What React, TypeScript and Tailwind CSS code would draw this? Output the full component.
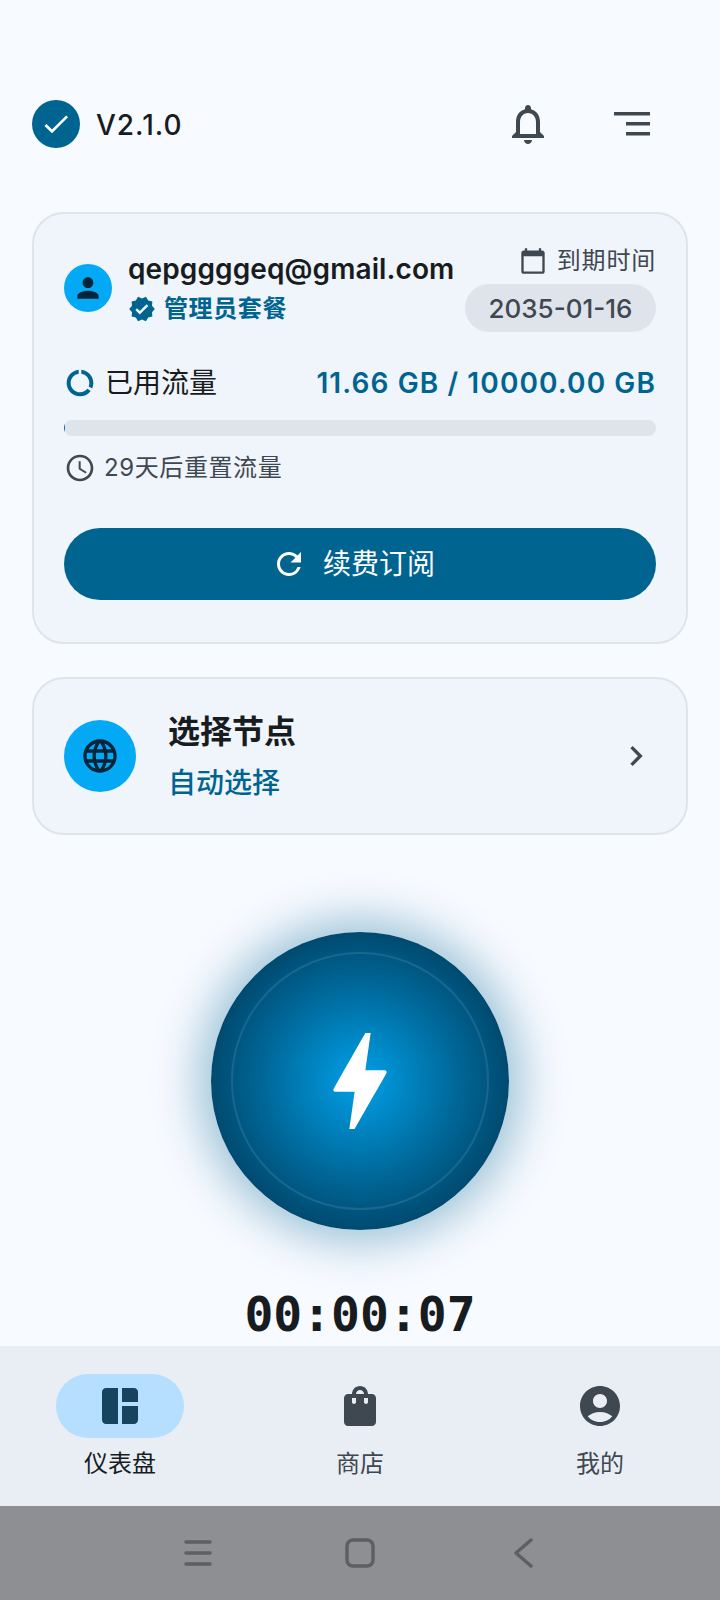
import React from "react";
import {
  MdAccessTime,
  MdAccountCircle,
  MdBolt,
  MdCalendarToday,
  MdCheck,
  MdChevronRight,
  MdDataUsage,
  MdLanguage,
  MdNotificationsNone,
  MdPerson,
  MdRefresh,
  MdShoppingBag,
  MdSpaceDashboard,
  MdVerified,
} from "react-icons/md";

const font = "font-['Inter','Noto_Sans_CJK_SC',sans-serif]";

const App: React.FC = () => {
  return (
    <div className={`${font} flex h-[1600px] w-[720px] flex-col overflow-hidden bg-[#f7faff] text-[#171c20]`}>
      <div className="flex-1 px-8 pt-[100px]">
        {/* header */}
        <div className="flex h-12 items-center">
          <div className="flex h-12 w-12 items-center justify-center rounded-full bg-[#006491]">
            <MdCheck size={32} color="#ffffff" />
          </div>
          <span className="ml-4 pt-[2px] text-[28px] leading-none font-medium tracking-[1px]">V2.1.0</span>
          <MdNotificationsNone size={48} color="#3f4850" className="ml-auto mr-[62px]" />
          <svg width="36" height="24" viewBox="0 0 36 24" className="mr-[38px]" fill="#3f4850">
            <rect x="0" y="0" width="36" height="3.5" />
            <rect x="12" y="10" width="24" height="3.5" />
            <rect x="12" y="20" width="24" height="3.5" />
          </svg>
        </div>

        {/* subscription card */}
        <div className="mt-16 h-[432px] rounded-[32px] border-2 border-[#dfe3eb] bg-[#f0f4fb] px-[30px]">
          <div className="flex items-start justify-between pt-[30px]">
            <div className="flex items-center gap-4 pt-[7px]">
              <div className="flex h-12 w-12 items-center justify-center rounded-full bg-[#03a9f4]">
                <MdPerson size={32} color="#00243a" />
              </div>
              <div>
                <div className="text-[28px] leading-[36px] font-semibold tracking-[0.1px]">qepggggeq@gmail.com</div>
                <div className="mt-[6px] flex items-center gap-[8px] text-[24px] leading-8 font-semibold tracking-[0.6px] text-[#006491]">
                  <MdVerified size={28} />
                  管理员套餐
                </div>
              </div>
            </div>
            <div className="flex flex-col items-end pt-[1px]">
              <div className="flex h-8 items-center gap-[10px] text-[24px] leading-8 tracking-[0.8px] text-[#3f4850]">
                <MdCalendarToday size={28} />
                到期时间
              </div>
              <div className="mt-[7px] flex h-12 w-[191px] items-center justify-center rounded-full bg-[#dfe3eb] text-[26px] font-medium text-[#3f4850]">
                2035-01-16
              </div>
            </div>
          </div>

          <div className="mt-[33px] flex h-9 items-center justify-between">
            <div className="flex items-center gap-[9px] text-[28px] leading-9">
              <MdDataUsage size={32} color="#006491" />
              已用流量
            </div>
            <div className="text-[28px] leading-9 font-semibold tracking-[1.1px] text-[#006491]">11.66 GB / 10000.00 GB</div>
          </div>

          <div className="mt-[19px] h-4 overflow-hidden rounded-full bg-[#dfe3eb]">
            <div className="h-full w-[1px] bg-[#006491]" />
          </div>

          <div className="mt-[16px] flex h-8 items-center gap-2 text-[24px] leading-8 tracking-[0.6px] text-[#3f4850]">
            <MdAccessTime size={32} />
            29天后重置流量
          </div>

          <div className="mt-[44px] flex h-[72px] items-center justify-center gap-[16px] rounded-full bg-[#006491] pr-[14px] text-[28px] text-white">
            <MdRefresh size={36} />
            续费订阅
          </div>
        </div>

        {/* node picker */}
        <div className="mt-[33px] flex h-[158px] items-center rounded-[32px] border-2 border-[#dfe3eb] bg-[#f0f4fb] px-[30px]">
          <div className="flex h-[72px] w-[72px] items-center justify-center rounded-full bg-[#03a9f4]">
            <MdLanguage size={40} color="#00243a" />
          </div>
          <div className="ml-8 flex-1">
            <div className="text-[32px] leading-10 font-semibold">选择节点</div>
            <div className="mt-[13px] text-[28px] leading-9 font-medium text-[#006491]">自动选择</div>
          </div>
          <MdChevronRight size={40} color="#3f4850" />
        </div>

        {/* connect button */}
        <div className="mt-[97px] flex justify-center">
          <div className="flex h-[298px] w-[298px] items-center justify-center rounded-full bg-[radial-gradient(closest-side,#00a0e8_0%,#006a9c_62%,#004a70_100%)] shadow-[0_0_46px_12px_rgba(0,100,145,0.38)]">
            <div className="flex h-[258px] w-[258px] items-center justify-center rounded-full border-2 border-white/10">
              <MdBolt size={128} color="#ffffff" />
            </div>
          </div>
        </div>

        <div className="mt-[56px] text-center font-['DejaVu_Sans_Mono',monospace] text-[48px] leading-[56px] font-bold">
          00:00:07
        </div>
      </div>

      {/* bottom tabs */}
      <div className="flex h-[160px] bg-[#e9eef5] pt-[28px]">
        <div className="flex flex-1 flex-col items-center">
          <div className="flex h-16 w-32 items-center justify-center rounded-full bg-[#b5deff]">
            <MdSpaceDashboard size={48} color="#16445f" />
          </div>
          <span className="mt-[10px] text-[24px] leading-8">仪表盘</span>
        </div>
        <div className="flex flex-1 flex-col items-center text-[#3f4850]">
          <div className="flex h-16 w-32 items-center justify-center">
            <MdShoppingBag size={48} />
          </div>
          <span className="mt-[10px] text-[24px] leading-8">商店</span>
        </div>
        <div className="flex flex-1 flex-col items-center text-[#3f4850]">
          <div className="flex h-16 w-32 items-center justify-center">
            <MdAccountCircle size={48} />
          </div>
          <span className="mt-[10px] text-[24px] leading-8">我的</span>
        </div>
      </div>

      {/* system nav */}
      <div className="flex h-[94px] items-center justify-center bg-[#8d8f93] pr-[3px]">
        <svg width="28" height="28" viewBox="0 0 28 28" stroke="#5d5f62" strokeWidth="3.5" strokeLinecap="round">
          <path d="M2 3h24M2 14h24M2 25h24" />
        </svg>
        <svg width="30" height="30" viewBox="0 0 30 30" fill="none" stroke="#5d5f62" strokeWidth="3.5" className="ml-[133px]">
          <rect x="2" y="2" width="26" height="26" rx="6" />
        </svg>
        <svg width="20" height="30" viewBox="0 0 20 30" fill="none" stroke="#5d5f62" strokeWidth="3.5" strokeLinecap="round" strokeLinejoin="round" className="ml-[138px]">
          <path d="M18 2 3 15l15 13" />
        </svg>
      </div>
    </div>
  );
};

export default App;
